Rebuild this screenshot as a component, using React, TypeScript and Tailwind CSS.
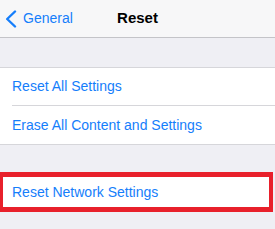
export default function App() {
  return (
    <div
      className="flex h-[229px] w-[275px] flex-col overflow-hidden bg-[#efeff4]"
      style={{ fontFamily: '"Liberation Sans", Arial, sans-serif' }}
    >
      {/* Nav bar */}
      <header className="relative flex h-[38px] items-center border-b border-[#c4c4c8] bg-[#f7f7f8]">
        <div className="flex items-center pl-[5px] text-[14px] text-[#157efb]">
          <svg width="12" height="18" viewBox="0 0 12 18" className="mr-[6px]">
            <path d="M10 1.5 L2.2 9 L10 16.5" fill="none" stroke="#157efb" strokeWidth="2.4" strokeLinecap="round" strokeLinejoin="round" />
          </svg>
          <span>General</span>
        </div>
        <div className="pointer-events-none absolute left-0 right-0 text-center text-[15px] font-bold text-black">
          Reset
        </div>
      </header>

      <div className="h-[29px]" />

      {/* Group 1 */}
      <div className="border-y border-[#d6d6da] bg-white">
        <div className="flex h-[37px] items-center pl-[12px] text-[14px] text-[#157efb]">
          Reset All Settings
        </div>
        <div className="ml-[12px] h-px bg-[#d6d6da]" />
        <div className="flex h-[38px] items-center pl-[12px] text-[14px] text-[#157efb]">
          Erase All Content and Settings
        </div>
      </div>

      <div className="h-[27px]" />

      {/* Highlighted row */}
      <div className="mr-[2px] flex h-[40px] items-center border-b-[5px] border-l-[3px] border-r-[4px] border-t-[5px] border-[#e8202b] bg-white pl-[9px] text-[14px] text-[#157efb]">
        Reset Network Settings
      </div>
    </div>
  )
}
